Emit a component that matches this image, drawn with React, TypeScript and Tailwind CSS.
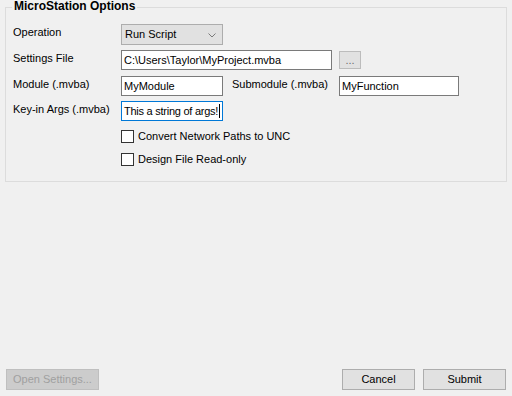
import React from "react";

const font = { fontFamily: '"Liberation Sans", Arial, sans-serif' };

const Label: React.FC<{ text: string; width: number }> = ({ text, width }) => (
  <div className="mt-[1px] shrink-0 leading-[15px]" style={{ width }}>
    {text}
  </div>
);

const TextBox: React.FC<{ value: string; width: number; focused?: boolean }> = ({ value, width, focused }) => (
  <div
    className={`h-[20px] shrink-0 bg-white border pl-[2px] leading-[18px] whitespace-nowrap overflow-hidden ${
      focused ? "border-[#0078d7] tracking-[-0.25px]" : "border-[#7a7a7a]"
    }`}
    style={{ width }}
  >
    {value}
    {focused && <span className="inline-block w-[1px] h-[14px] bg-black align-[-3px] ml-[1px]" />}
  </div>
);

const CheckRow: React.FC<{ text: string }> = ({ text }) => (
  <div className="flex items-center h-[13px] pl-[108px]">
    <div className="w-[13px] h-[13px] bg-white border border-[#333333] shrink-0" />
    <div className="ml-[4px] leading-[15px]">{text}</div>
  </div>
);

export default function App() {
  return (
    <div className="w-[512px] h-[396px] bg-[#f0f0f0] text-[11px] text-black flex flex-col" style={font}>
      <div className="relative mt-[7px] mx-[5px] h-[175px] border border-[#dcdcdc] pl-[7px] pt-[16px]">
        <span className="absolute left-[6px] top-[-9px] px-[2px] bg-[#f0f0f0] font-bold text-[12px] leading-[15px]">
          MicroStation Options
        </span>

        <div className="flex h-[21px]">
          <Label text="Operation" width={108} />
          <div className="w-[102px] h-[21px] bg-[#e1e1e1] border border-[#adadad] flex items-center pl-[3px] pr-[6px]">
            <span className="flex-1 leading-[15px]">Run Script</span>
            <svg width="8" height="5" viewBox="0 0 8 5" className="mt-[1px]">
              <path d="M0.5 0.5 L4 4 L7.5 0.5" fill="none" stroke="#7a7a7a" strokeWidth="1" />
            </svg>
          </div>
        </div>

        <div className="flex h-[20px] mt-[5px]">
          <Label text="Settings File" width={108} />
          <TextBox value="C:\Users\Taylor\MyProject.mvba" width={211} />
          <div className="ml-[7px] mt-[1px] w-[22px] h-[18px] bg-[#e1e1e1] border border-[#bcbcbc] text-[#6d6d6d] text-[11px] flex items-center justify-center leading-[10px]">
            ...
          </div>
        </div>

        <div className="flex h-[20px] mt-[6px]">
          <Label text="Module (.mvba)" width={108} />
          <TextBox value="MyModule" width={102} />
          <div className="ml-[9px]">
            <Label text="Submodule (.mvba)" width={107} />
          </div>
          <TextBox value="MyFunction" width={120} />
        </div>

        <div className="flex h-[20px] mt-[5px]">
          <Label text="Key-in Args (.mvba)" width={108} />
          <TextBox value="This a string of args!" width={102} focused />
        </div>

        <div className="mt-[9px]">
          <CheckRow text="Convert Network Paths to UNC" />
        </div>
        <div className="mt-[10px]">
          <CheckRow text="Design File Read-only" />
        </div>
      </div>

      <div className="mt-auto mb-[6px] px-[6px] flex items-center">
        <div className="w-[93px] h-[21px] bg-[#cccccc] border border-[#bfbfbf] text-[#a0a0a0] flex items-center justify-center leading-[15px]">
          Open Settings...
        </div>
        <div className="ml-auto w-[73px] h-[21px] bg-[#e1e1e1] border border-[#adadad] flex items-center justify-center leading-[15px]">
          Cancel
        </div>
        <div className="ml-[8px] w-[83px] h-[21px] bg-[#e1e1e1] border border-[#adadad] flex items-center justify-center leading-[15px]">
          Submit
        </div>
      </div>
    </div>
  );
}
